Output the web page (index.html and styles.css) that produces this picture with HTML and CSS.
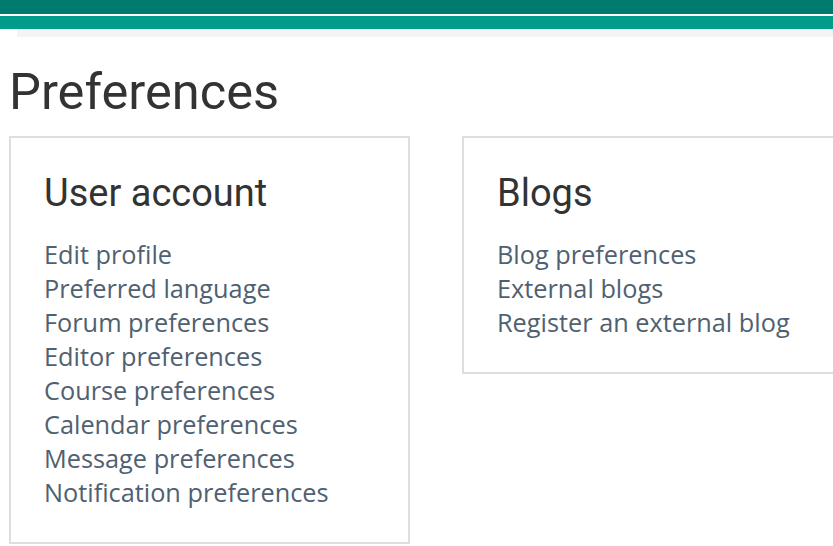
FILE: index.html
```html
<!DOCTYPE html>
<html>
<head>
<meta charset="utf-8">
<link rel="stylesheet" href="styles.css">
</head>
<body>
<header class="topbar">
  <div class="bar-dark"></div>
  <div class="bar-light"></div>
  <div class="bar-grey"></div>
</header>
<main class="page">
  <h1 class="page-title">Preferences</h1>
  <div class="cards">
    <section class="card">
      <h2 class="card-title">User account</h2>
      <ul class="links">
        <li><a href="#">Edit profile</a></li>
        <li><a href="#">Preferred language</a></li>
        <li><a href="#">Forum preferences</a></li>
        <li><a href="#">Editor preferences</a></li>
        <li><a href="#">Course preferences</a></li>
        <li><a href="#">Calendar preferences</a></li>
        <li><a href="#">Message preferences</a></li>
        <li><a href="#">Notification preferences</a></li>
      </ul>
    </section>
    <section class="card card-wide">
      <h2 class="card-title">Blogs</h2>
      <ul class="links">
        <li><a href="#">Blog preferences</a></li>
        <li><a href="#">External blogs</a></li>
        <li><a href="#">Register an external blog</a></li>
      </ul>
    </section>
  </div>
</main>
</body>
</html>
```
FILE: styles.css
```css
html, body { margin: 0; padding: 0; background: #fff; overflow: hidden; }
body { font-family: "Open Sans", sans-serif; }
.topbar { display: flex; flex-direction: column; }
.bar-dark { height: 14px; background: #007c6e; }
.bar-light { height: 13px; margin-top: 2px; background: #009c8b; }
.bar-grey { height: 8px; margin-left: 17px; background: #f4f4f4; }
.page { padding: 0 0 0 9px; overflow: hidden; }
.page-title {
  font-family: Roboto, sans-serif;
  font-weight: 400;
  font-size: 50.6px;
  line-height: 60px;
  color: #333;
  margin: 25px 0 14px 0;
}
.cards { display: flex; gap: 52px; align-items: flex-start; }
.card {
  flex: none;
  border: 2px solid #dedede;
  padding: 30px 0 33px 33px;
  box-sizing: border-box;
  width: 401px;
}
.card-wide { width: 420px; }
.card-title {
  font-family: Roboto, sans-serif;
  font-weight: 400;
  font-size: 38px;
  line-height: 50px;
  color: #333;
  margin: 0 0 19px 0;
}
.links { list-style: none; margin: 0; padding: 0; }
.links li { font-size: 25.3px; line-height: 34px; }
.links a { color: #4f6170; text-decoration: none; }
```
